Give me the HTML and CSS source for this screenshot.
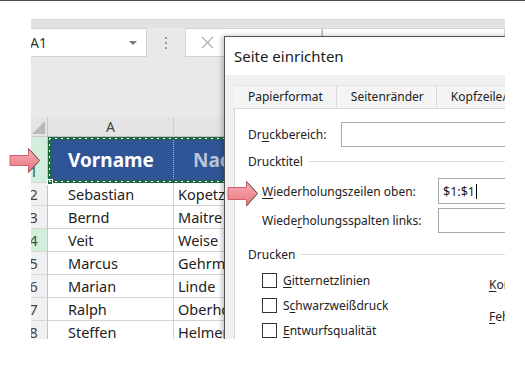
FILE: index.html
```html
<!DOCTYPE html>
<html lang="de">
<head>
    <meta charset="UTF-8">
    <meta name="viewport" content="width=device-width, initial-scale=1.0">
    <title>Drucktitel wiederholen</title>
    <link rel="stylesheet" href="styles.css">
</head>
<body>
    <div class="shot">
        <div class="ribbon-edge"></div>

        <div class="formula-bar">
            <div class="name-box">
                <span>A1</span>
                <span class="drop"></span>
            </div>
            <div class="grip"><i></i><i></i><i></i></div>
            <div class="fx-buttons">
                <svg class="cancel" width="13" height="13" viewBox="0 0 13 13">
                    <path d="M1 1L12 12M12 1L1 12" stroke="#b2b2b2" stroke-width="1.4" fill="none"/>
                </svg>
            </div>
            <div class="formula-input"></div>
        </div>

        <div class="sheet-gap"></div>

        <div class="sheet">
            <div class="corner"></div>
            <div class="col-head">A</div>
            <div class="col-head"></div>

            <div class="row-head sel">1</div>
            <div class="cell title first">Vorname</div>
            <div class="cell title faded">Nachname</div>

            <div class="row-head">2</div>
            <div class="cell first">Sebastian</div>
            <div class="cell">Kopetz</div>

            <div class="row-head">3</div>
            <div class="cell first">Bernd</div>
            <div class="cell">Maitre</div>

            <div class="row-head sel">4</div>
            <div class="cell first">Veit</div>
            <div class="cell">Weise</div>

            <div class="row-head">5</div>
            <div class="cell first">Marcus</div>
            <div class="cell">Gehrmann</div>

            <div class="row-head">6</div>
            <div class="cell first">Marian</div>
            <div class="cell">Linde</div>

            <div class="row-head">7</div>
            <div class="cell first">Ralph</div>
            <div class="cell">Oberhofer</div>

            <div class="row-head">8</div>
            <div class="cell first">Steffen</div>
            <div class="cell">Helmer</div>

            <div class="marquee"><span class="handle"></span></div>
        </div>

        <div class="dialog">
            <div class="dialog-title">Seite einrichten</div>
            <div class="dialog-body">
                <div class="tabs">
                    <div class="tab">Papierformat</div>
                    <div class="tab">Seitenränder</div>
                    <div class="tab">Kopfzeile/Fußzeile</div>
                </div>
                <div class="panel">
                    <div class="field">
                        <label class="lbl-area">Dr<u>u</u>ckbereich:</label>
                        <div class="box"></div>
                    </div>

                    <div class="group-head"><span>Drucktitel</span></div>
                    <div class="field sub rows-top">
                        <label class="lbl-titles"><u>W</u>iederholungszeilen oben:</label>
                        <div class="box">$1:$1<span class="caret"></span></div>
                    </div>
                    <div class="field sub cols-left">
                        <label class="lbl-titles">Wiede<u>r</u>holungsspalten links:</label>
                        <div class="box"></div>
                    </div>

                    <div class="group-head print-head"><span>Drucken</span></div>
                    <div class="print-opts">
                        <div class="checks">
                            <div class="check"><span class="tick"></span><span><u>G</u>itternetzlinien</span></div>
                            <div class="check"><span class="tick"></span><span>S<u>c</u>hwarzweißdruck</span></div>
                            <div class="check"><span class="tick"></span><span><u>E</u>ntwurfsqualität</span></div>
                        </div>
                        <div class="side-labels">
                            <div><u>K</u>ommentare:</div>
                            <div><u>F</u>ehlerwerte als:</div>
                        </div>
                    </div>
                </div>
            </div>
        </div>
    </div>

    <svg class="arrow arrow-row" width="32" height="27" viewBox="0 0 32 27">
        <defs>
            <linearGradient id="pinkA" x1="0" y1="0" x2="0" y2="1">
                <stop offset="0" stop-color="#f8b0b5"/>
                <stop offset="1" stop-color="#e9737e"/>
            </linearGradient>
        </defs>
        <path d="M1 8.5H19.5V1.5L30.5 13.5L19.5 25.5V18.5H1Z" fill="url(#pinkA)" stroke="#d0606c"/>
        <path d="M19.5 1.5L30.5 13.5L19.5 25.5" fill="none" stroke="#5a5a5a"/>
    </svg>

    <svg class="arrow arrow-field" width="32" height="28" viewBox="0 0 32 28">
        <defs>
            <linearGradient id="pinkB" x1="0" y1="0" x2="0" y2="1">
                <stop offset="0" stop-color="#f8b0b5"/>
                <stop offset="1" stop-color="#e9737e"/>
            </linearGradient>
        </defs>
        <path d="M1 7.5H19.5V1.5L30.5 13.5L19.5 26V19.5H1Z" fill="url(#pinkB)" stroke="#d0606c"/>
        <path d="M19.5 1.5L30.5 13.5L19.5 26" fill="none" stroke="#5a5a5a"/>
    </svg>
</body>
</html>
```

FILE: styles.css
```css
body {
    margin: 0;
    background: #fff;
    border-top: 1px solid #4d4d4d;
    font-family: "Noto Sans", "Open Sans", sans-serif;
    color: #222;
    position: relative;
    height: 367px;
    overflow: hidden;
}

/* the cropped excel window */
.shot {
    margin: 18px 0 0 31px;
    width: 474px;
    height: 320px;
    background: #e9e9e9;
    position: relative;
    overflow: hidden;
}

.ribbon-edge {
    height: 8px;
    background: #e2e2e2;
    border-top: 1px solid #d6d6d6;
}

.formula-bar {
    display: flex;
    height: 29px;
    margin-left: -11px;
}

.name-box {
    width: 127px;
    box-sizing: border-box;
    background: #fff;
    border: 1px solid #d2d2d2;
    display: flex;
    align-items: center;
    justify-content: space-between;
    padding: 0 9px 0 9px;
    font-size: 14px;
    color: #333;
}

.drop {
    width: 0;
    height: 0;
    border-left: 4px solid transparent;
    border-right: 4px solid transparent;
    border-top: 4px solid #777;
}

.grip {
    width: 38px;
    display: flex;
    flex-direction: column;
    align-items: center;
    justify-content: center;
    gap: 3px;
}

.grip i {
    width: 2px;
    height: 2px;
    background: #9a9a9a;
}

.fx-buttons {
    width: 137px;
    box-sizing: border-box;
    background: #fff;
    border: 1px solid #d2d2d2;
    display: flex;
    align-items: center;
    padding-left: 15px;
}

.formula-input {
    flex: 1;
    background: #fff;
    border: 1px solid #d2d2d2;
    border-left-color: #b8b8b8;
}

.sheet-gap {
    height: 60px;
}

/* grid */
.sheet {
    display: grid;
    grid-template-columns: 28px 126px 140px;
    grid-template-rows: 20px 46px repeat(7, 23px);
    margin-left: -11px;
    position: relative;
    background: #fff;
}

.corner {
    background: #e4e4e4;
    border-right: 1px solid #c9c9c9;
    border-bottom: 1px solid #c9c9c9;
    position: relative;
}

.corner::after {
    content: "";
    position: absolute;
    right: 2px;
    bottom: 2px;
    border-left: 13px solid transparent;
    border-bottom: 13px solid #b9b9b9;
}

.col-head {
    background: #e4e4e4;
    border-right: 1px solid #cfcfcf;
    border-bottom: 1px solid #c2c2c2;
    text-align: center;
    font-size: 14px;
    line-height: 19px;
    color: #444;
}

.row-head {
    background: #f1f1f1;
    border-right: 1px solid #c4c4c4;
    border-bottom: 1px solid #d8d8d8;
    font-size: 15px;
    color: #444;
    text-align: center;
    display: flex;
    align-items: flex-end;
    justify-content: center;
    line-height: 21px;
}

.row-head.sel {
    background: #d3eedd;
    color: #2c5f3f;
}

.cell {
    border-right: 1px solid #d4d4d4;
    border-bottom: 1px solid #d4d4d4;
    font-size: 14.5px;
    padding-left: 4px;
    display: flex;
    align-items: center;
    white-space: nowrap;
    overflow: hidden;
}

.cell.first {
    padding-left: 20px;
}

.cell.title {
    background: #2f5596;
    color: #fff;
    font-weight: bold;
    font-size: 19px;
    border-bottom-color: #2f5596;
    border-right: 1px dotted #9fb3d4;
}

.cell.faded {
    color: #b9c4d7;
    padding-left: 19px;
}

.marquee {
    position: absolute;
    left: 28px;
    top: 20px;
    width: 300px;
    height: 46px;
    box-sizing: border-box;
    border: 3px solid #1f6a42;
}

.marquee::after {
    content: "";
    position: absolute;
    inset: -2px;
    background:
        repeating-linear-gradient(90deg, #fff 0 2px, transparent 2px 6px) 0 0 / 100% 1px no-repeat,
        repeating-linear-gradient(90deg, #fff 0 2px, transparent 2px 6px) 0 100% / 100% 1px no-repeat,
        repeating-linear-gradient(180deg, #fff 0 2px, transparent 2px 6px) 0 0 / 1px 100% no-repeat,
        repeating-linear-gradient(180deg, #fff 0 2px, transparent 2px 6px) 100% 0 / 1px 100% no-repeat;
}

.handle {
    position: absolute;
    left: -4px;
    bottom: -5px;
    width: 4px;
    height: 4px;
    background: #1f6a42;
    border: 1px solid #fff;
}

/* page setup dialog */
.dialog {
    position: absolute;
    left: 193px;
    top: 17px;
    width: 300px;
    height: 330px;
    background: #f0f0f0;
    border-left: 1px solid #555;
    border-top: 1px solid #555;
    box-shadow: -2px 0 5px rgba(0, 0, 0, 0.25);
    font-size: 12px;
}

.dialog-title {
    height: 38px;
    line-height: 38px;
    background: #fff;
    padding-left: 9px;
    font-size: 15px;
    color: #1a1a1a;
}

.dialog-body {
    padding: 10px 0 0 9px;
}

.tabs {
    display: flex;
    height: 23px;
}

.tab {
    padding: 0 13px 0 14px;
    line-height: 22px;
    background: #f4f4f4;
    border-top: 1px solid #e4e4e4;
    border-right: 1px solid #dadada;
    white-space: nowrap;
}

.tab:first-child {
    width: 76px;
}

.tab:nth-child(2) {
    width: 72px;
}

.panel {
    background: #fff;
    border: 1px solid #d9d9d9;
    height: 300px;
    padding: 13px 0 0 13px;
    width: 400px;
}

.field {
    display: flex;
    align-items: center;
    height: 25px;
}

.field label {
    white-space: nowrap;
}

.lbl-area {
    width: 93px;
}

.lbl-titles {
    width: 176px;
}

.box {
    flex: 1;
    height: 100%;
    box-sizing: border-box;
    border: 1px solid #a9a9a9;
    padding-left: 4px;
    display: flex;
    align-items: center;
    font-size: 12.5px;
}

.caret {
    width: 1px;
    height: 15px;
    background: #000;
    margin-left: 1px;
}

.field.sub {
    margin-left: 14px;
}

.rows-top {
    margin-top: 9px;
    height: 26px;
}

.cols-left {
    margin-top: 4px;
}

.group-head {
    display: flex;
    align-items: center;
    gap: 5px;
    height: 16px;
    margin-top: 6px;
}

.group-head::after {
    content: "";
    flex: 1;
    height: 1px;
    background: #dcdcdc;
}

.print-head {
    margin-top: 13px;
}

.print-opts {
    display: flex;
    margin-left: 14px;
    margin-top: 11px;
}

.checks {
    width: 227px;
    display: flex;
    flex-direction: column;
    gap: 10px;
}

.check {
    display: flex;
    align-items: center;
    height: 15px;
    gap: 6px;
    white-space: nowrap;
}

.tick {
    width: 15px;
    height: 15px;
    box-sizing: border-box;
    border: 1px solid #333;
    background: #fff;
}

.side-labels {
    display: flex;
    flex-direction: column;
    gap: 16px;
    padding-top: 4px;
    white-space: nowrap;
}

.side-labels div {
    height: 16px;
    line-height: 16px;
}

u {
    text-underline-offset: 2px;
}

.arrow {
    position: absolute;
}

.arrow-row {
    left: 9px;
    top: 146px;
}

.arrow-field {
    left: 227px;
    top: 179px;
}
```
